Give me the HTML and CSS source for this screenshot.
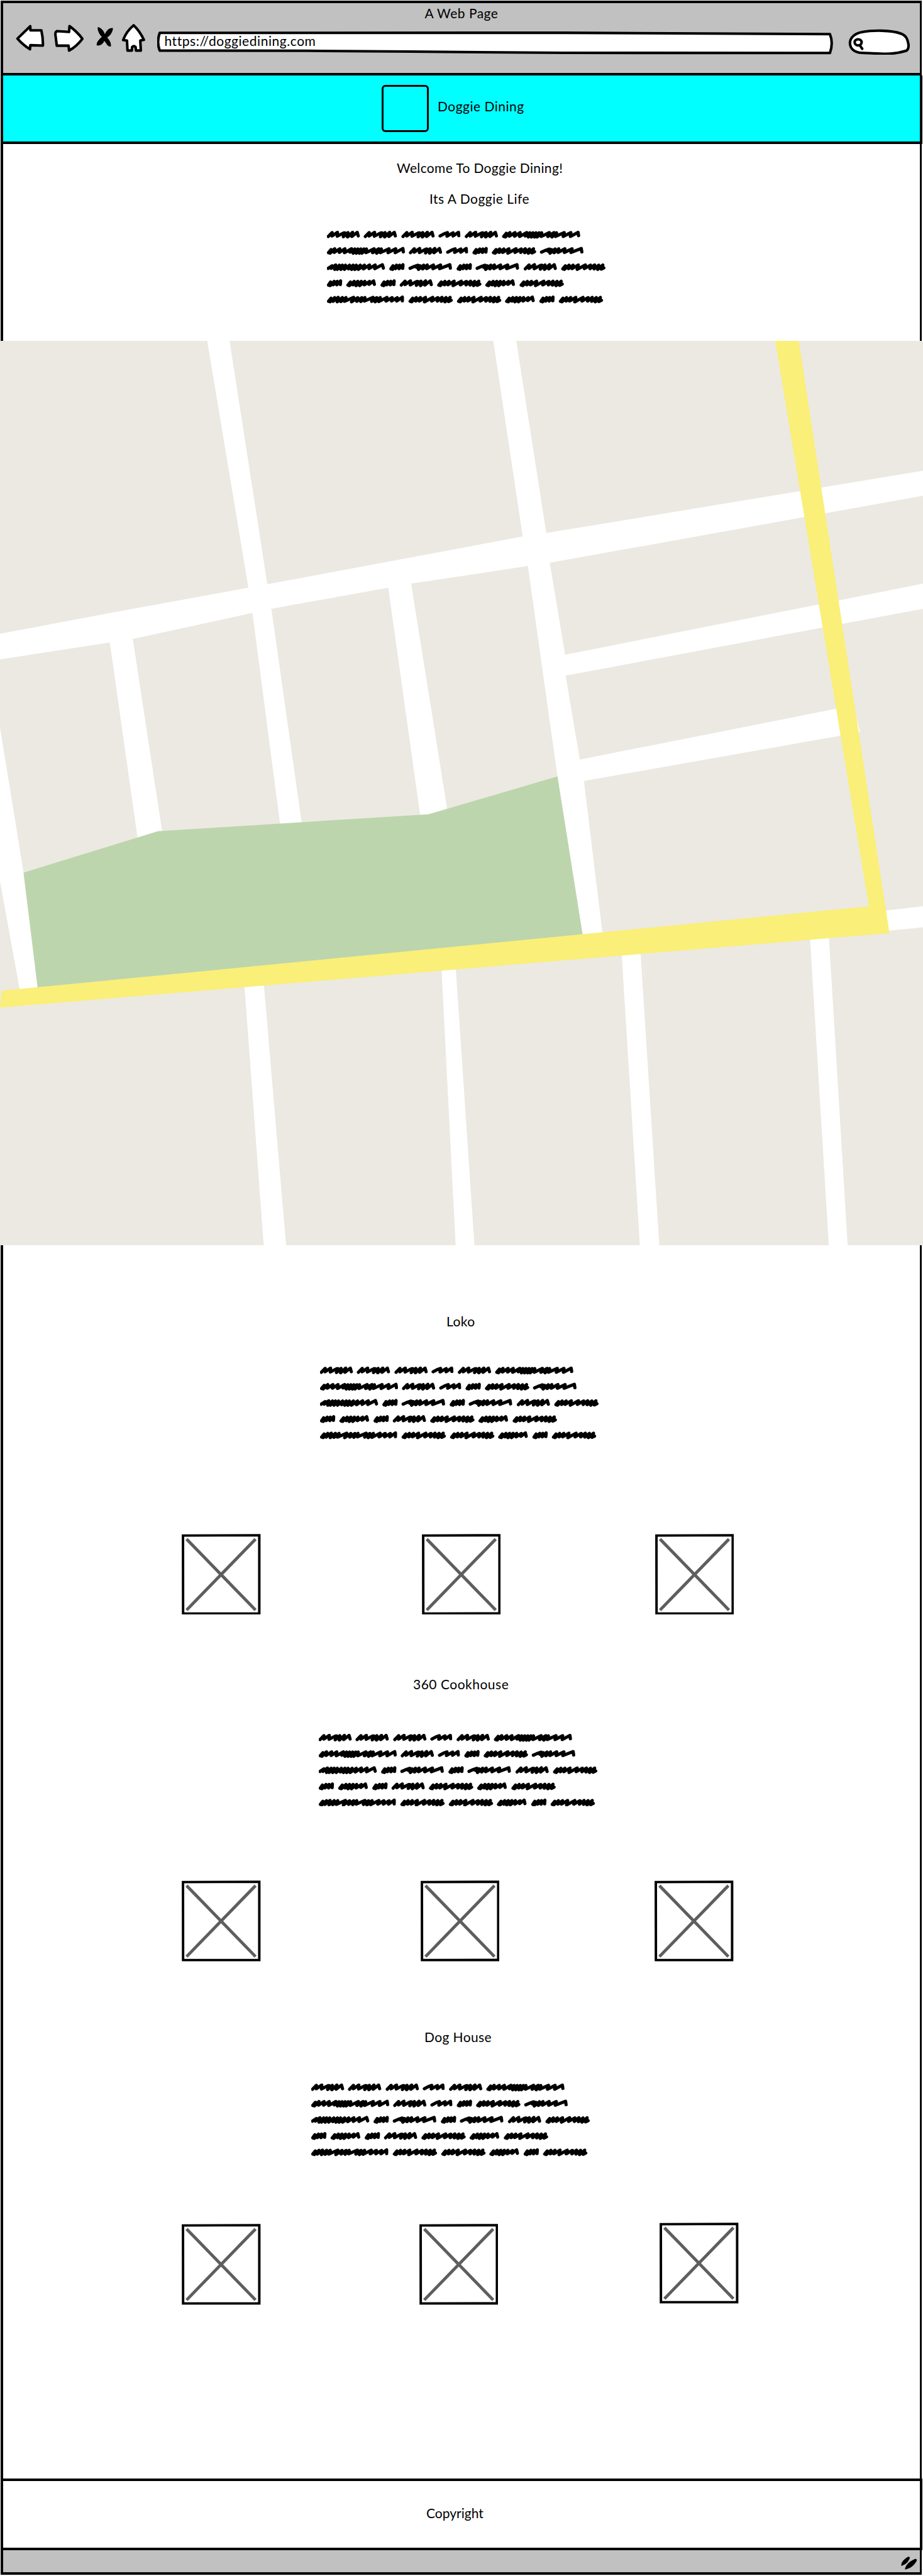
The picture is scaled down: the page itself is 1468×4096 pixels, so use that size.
FILE: index.html
```html
<!DOCTYPE html>
<html lang="en">
<head>
<meta charset="utf-8">
<title>Doggie Dining</title>
<link rel="stylesheet" href="styles.css">
</head>
<body>
<svg class="defs" aria-hidden="true">
  <defs>
    <path id="w-a" d="M2.5 11L10 3.5L10 10L20.500 3L20 10.500L33 4L35 4L32 11.500L41 3.500L40 12L50 3L48.500 11L59 3L61 10"/>
    <path id="w-b" d="M2.500 10L10 6L17 3.500L16 10.500L28 4L28 10L38.500 3L39 9.500"/>
    <path id="w-c" d="M3 11L8 5L6 12L15 3.500L14 10.500L25 3.500L24 10.500L35 3.500L34 11L48 3.500L45 10L54 4L51 12L60 4L57 12L66 4L63 12L72 4L68 12L77 4L76 11L92 3.500L89 11L101 3.500L97 12L106 4L104 11L121 3.500L119 11L134 3.500L133 11L148 3L149 9.500"/>
    <path id="w-d" d="M3 11L7 5L6 12L14 4L12 10.500L20 4L19 10.500L26.500 3L26 10"/>
    <path id="w-e" d="M3 11L8 5L6 12L15 4L14 10.500L23 4L21 10.500L33 3.500L31 12L47 3.500L45 10.500L57 4L56 10.500L65 3.500L64 11L73 4L71 12L81 3.500L78 11.500L83 9"/>
    <path id="w-f" d="M2.500 10L9 7L18 4L15 8L22 5L19 12L29 4L27 11L36 3.500L35 10.500L48 3.500L47 10.500L62 3.500L60 10.500L80 3L81 9.500"/>
    <path id="w-g" d="M2.500 10L10 5L8 10L17 3.500L15 12L24 4L20 12L30 4L27 12L36 4L34 12L44 4L42 11L51 4L48 12L57 4L54 12L65 4L61 12L73 4L71 11L83 3.500L82 10.500L94 3.500L93 10.500L108 3L110 9.500"/>
    <path id="w-h" d="M3 11L8 5L6 12L15 4L13 10.500L22 4L19 12L29 4L26 12L36 4L35 10.500L45 4L44 9.500L53 3L54.500 9.500"/>
    <path id="w-i" d="M3 11L8 5L6 12L15 4L12 11L22 3.500L20 12L30 4L27 11.500L37 4L34 11L52 3.500L48 12L60 4L58 11L68 4L66 11.500L74 4L73 10.500L90 3.500L87 11L97 4L94 12L104 4L101 11.500L117 3.500L115 10.500L127 4L126 10.500L137 4L136 10.500L147 3L147 10"/>
    <g id="scribble" fill="none" stroke="#000" stroke-width="6.300" stroke-linecap="round" stroke-linejoin="round">
      <use href="#w-a" x="0"/><use href="#w-a" x="72.300"/><use href="#w-a" x="145.800"/><use href="#w-b" x="218"/><use href="#w-a" x="269.400"/><use href="#w-c" x="341.700"/>
      <g transform="translate(0 31.600)"><use href="#w-c" x="0"/><use href="#w-a" x="160.300"/><use href="#w-b" x="233"/><use href="#w-d" x="284"/><use href="#w-e" x="321.800"/><use href="#w-f" x="416"/></g>
      <g transform="translate(0 63.200)"><use href="#w-g" x="0"/><use href="#w-d" x="121.700"/><use href="#w-f" x="159.600"/><use href="#w-d" x="253"/><use href="#w-f" x="290.500"/><use href="#w-a" x="384.200"/><use href="#w-e" x="457"/></g>
      <g transform="translate(0 94.800)"><use href="#w-d" x="0"/><use href="#w-h" x="37.900"/><use href="#w-d" x="104.500"/><use href="#w-a" x="142.400"/><use href="#w-e" x="215"/><use href="#w-h" x="309"/><use href="#w-e" x="375.800"/></g>
      <g transform="translate(0 126.400)"><use href="#w-i" x="0"/><use href="#w-e" x="159.200"/><use href="#w-e" x="253.700"/><use href="#w-h" x="347.500"/><use href="#w-d" x="414.400"/><use href="#w-e" x="452.300"/></g>
    </g>
    <g id="photo" fill="none">
      <path d="M9.500 10L144 148.500M144 10L9.500 148.500" stroke="#5e5e5e" stroke-width="6"/>
      <path d="M2.500 3.200L151.300 2.600L151.300 155L2.700 155.200Z" stroke="#000" stroke-width="4.800"/>
    </g>
  </defs>
</svg>

<div class="browser">
  <div class="toolbar">
    <div class="window-title">A Web Page</div>
    <div class="controls">
      <svg class="icon back" viewBox="31 46 56 61"><path d="M34.400 74.700L59.300 50.500L59.700 58.500L81 58.500Q84.500 74 84 88.300L59.500 87.500L58.800 95.500Q45 87 34.400 74.700Z"/></svg>
      <svg class="icon forward" viewBox="104 46 59 61"><path d="M111 60L134.500 61.700L135.300 50.300Q150 61 160.500 75Q149 90 134.500 98L133.500 88.300L110.500 88.500Q109 76 107.700 66Q108 61 111 60Z"/></svg>
      <svg class="icon stop" viewBox="187 46 33 61"><path class="solid" d="M190 52C197 53 202 60 204 66C207 58 213 53 219.500 54C220 62 213 70 208.500 72.500C213 78 217 84 215.500 90C210 91 207 85 203 79C200 85 195 89 188 88C187 81 193 76 198 71C193 66 189 59 190 52Z"/></svg>
      <svg class="icon home" viewBox="236 46 47 61"><path d="M260 48.700Q272 60 280 77L273 78.500L274 98L264.500 98L263.800 91Q260.500 88 257 91L256.500 98L248 98L247 78.500L239.500 77.500Q246 60 260 48.700Z"/></svg>
      <div class="address">
        <svg class="address-frame" viewBox="307 46 1319 61"><path d="M312 63.500L1100 63.300L1619 66Q1626 83 1619 102.700L1100 102.500L800 100L600 98.500L312 98Q305.500 82 312 63.500Z"/></svg>
        <span class="url">https://doggiedining.com</span>
      </div>
      <svg class="icon search" viewBox="1654 46 121 61"><path d="M1681 102.500C1666 102 1657 94 1657.500 82C1658.500 72 1668 64 1681 62C1702 58 1738 58 1757 65C1768 69 1770 77 1771.700 87Q1772 96 1767 98.500C1740 107 1722 104 1681 102.500Z"/><ellipse cx="1673.400" cy="82" rx="6.800" ry="6"/><path d="M1677 88.500L1681.400 94.500"/></svg>
    </div>
  </div>

  <header class="banner">
    <div class="logo"></div>
    <div class="brand">Doggie Dining</div>
  </header>

  <section class="hero">
    <h1 class="heading welcome">Welcome To Doggie Dining!</h1>
    <h2 class="heading tagline">Its A Doggie Life</h2>
    <svg class="copy" viewBox="0 0 543 142"><use href="#scribble"/></svg>
  </section>

  <svg class="map" viewBox="0 4 1568 1553" preserveAspectRatio="none">
    <rect x="0" y="4" width="1568" height="1553" fill="#ece9e2"/>
    <g fill="#fff">
      <path d="M0 507L188 471L422 428L888 340L928 334L1568 227V270L934 385L698 421L461 464L225 516L0 551Z"/>
      <path d="M352 4H390L454 421L461 464L513 835H476L430 480L422 428Z"/>
      <path d="M838 4H877L928 334L934 385L960 543L961 580L985 723L992 760L1024 1025H990L947 752L896 385L888 340Z"/>
      <path d="M186 518L225 512L276 850L234 860Z"/>
      <path d="M659 424L698 418L760 810L714 820Z"/>
      <path d="M955 544L1568 421V464L955 580Z"/>
      <path d="M980 724L1424 635L1456 655L1461 676L1428 682L985 761Z"/>
      <path d="M0 668L40 917L64 1115L76 1142L38 1146L33 1115L0 932Z"/>
      <path d="M1490 984L1568 975V1011L1490 1019Z"/>
      <path d="M415 1108L448 1106L486 1557H448Z"/>
      <path d="M750 1080L774 1078L806 1557H774Z"/>
      <path d="M1056 1055L1088 1052L1120 1557H1087Z"/>
      <path d="M1376 1028L1408 1026L1440 1557H1408Z"/>
    </g>
    <path fill="#bdd5ad" d="M40 917L268 846L728 817L947 752L990 1025L64 1115Z"/>
    <path fill="#faef78" d="M1317 4H1357L1511 1021L0 1149L3 1120L1476 975Z"/>
  </svg>

  <section class="place loko">
    <h2 class="heading">Loko</h2>
    <svg class="copy" viewBox="0 0 543 142"><use href="#scribble"/></svg>
    <div class="photos">
      <svg class="photo" viewBox="0 0 154 158"><use href="#photo"/></svg>
      <svg class="photo" viewBox="0 0 154 158"><use href="#photo"/></svg>
      <svg class="photo" viewBox="0 0 154 158"><use href="#photo"/></svg>
    </div>
  </section>

  <section class="place cookhouse">
    <h2 class="heading">360 Cookhouse</h2>
    <svg class="copy" viewBox="0 0 543 142"><use href="#scribble"/></svg>
    <div class="photos">
      <svg class="photo" viewBox="0 0 154 158"><use href="#photo"/></svg>
      <svg class="photo" viewBox="0 0 154 158"><use href="#photo"/></svg>
      <svg class="photo" viewBox="0 0 154 158"><use href="#photo"/></svg>
    </div>
  </section>

  <section class="place doghouse">
    <h2 class="heading">Dog House</h2>
    <svg class="copy" viewBox="0 0 543 142"><use href="#scribble"/></svg>
    <div class="photos">
      <svg class="photo" viewBox="0 0 154 158"><use href="#photo"/></svg>
      <svg class="photo" viewBox="0 0 154 158"><use href="#photo"/></svg>
      <svg class="photo" viewBox="0 0 154 158"><use href="#photo"/></svg>
    </div>
  </section>

  <footer class="footer">
    <div class="copyright">Copyright</div>
  </footer>
  <div class="statusbar">
    <svg class="grip" viewBox="1756 4982 34 29"><path d="M1771 4985C1775 4984 1775 4988 1773 4991C1769 4998 1764 5001 1758 5003C1757 4996 1762 4990 1771 4985Z"/><path d="M1785 4989C1789 4989 1789 4992 1786 4996C1779 5006 1772 5008 1765 5010C1765 5002 1774 4993 1785 4989Z"/></svg>
  </div>
</div>
</body>
</html>
```

FILE: styles.css
```css
* { box-sizing: border-box; }

body {
  margin: 0;
  background: #fff;
  color: #000;
  font-family: Lato, "Liberation Sans", sans-serif;
  font-size: 21px;
  line-height: 24px;
}

svg { display: block; flex: none; }

.defs { position: absolute; width: 0; height: 0; }

.browser {
  display: flex;
  flex-direction: column;
  width: 1465px;
  height: 4093px;
  margin: 1px 2px 0 1px;
  border: solid #000;
  border-width: 4px 3px 4px 4px;
}

/* browser chrome */
.toolbar {
  height: 115px;
  flex: none;
  padding-top: 4px;
  background: #c1c1c1;
  border-bottom: 4px solid #000;
}

.window-title { text-align: center; letter-spacing: 0.5px; }

.controls {
  display: flex;
  height: 50px;
  margin-top: 4.500px;
  padding-left: 20.300px;
}

.icon, .address-frame {
  height: 49.750px;
  fill: #fff;
  stroke: #000;
  stroke-width: 5;
  stroke-linejoin: round;
  stroke-linecap: round;
}

.solid { fill: #000; stroke: none; }

.back { width: 45.700px; }
.forward { width: 48.100px; margin-left: 13.900px; }
.stop { width: 27px; margin-left: 19.600px; }
.home { width: 38.300px; margin-left: 13px; }
.address { position: relative; flex: none; width: 1075.700px; margin-left: 19.600px; padding: 15.500px 0 0 11px; }
.address-frame { position: absolute; left: 0; top: 0; width: 100%; }
.url { position: relative; display: block; letter-spacing: 0.55px; }
.search { width: 98.700px; margin-left: 22.800px; }

/* site header */
.banner {
  display: flex;
  flex: none;
  height: 109px;
  margin: 0 -4px;
  padding: 15px 0 0 602px;
  background: #0ff;
  border: solid #000;
  border-width: 0 4px 4px;
}

.logo { width: 75px; height: 75px; border: 3px solid #000; border-radius: 6px; }
.brand { margin: 22px 0 0 14px; letter-spacing: 0.5px; }

.heading { margin: 0; font-size: 21px; font-weight: 400; line-height: 24px; letter-spacing: 0.4px; white-space: nowrap; }
.copy { width: 442.900px; height: 115.800px; }

.hero { flex: none; height: 313px; padding-top: 26px; }
.welcome { margin-left: 626px; letter-spacing: 0.35px; }
.tagline { margin: 25px 0 39px 678px; letter-spacing: 0.5px; }
.hero .copy { margin-left: 515.300px; }

.map { flex: none; width: 1468px; height: 1438px; margin: 0 -5px; }

/* restaurant listings */
.place { flex: none; }
.loko { height: 577px; padding-top: 109px; }
.cookhouse { height: 561px; padding-top: 109px; }
.doghouse { height: 823px; padding-top: 109px; }

.photos { display: flex; padding-left: 284.300px; }
.photo { width: 125.600px; height: 128.900px; }

.loko .heading { margin-left: 705px; }
.loko .copy { margin: 60px 0 149.800px 504.300px; }
.loko .photo + .photo { margin-left: 256px; }
.loko .photo:last-child { margin-left: 245.200px; }

.cookhouse .heading { margin-left: 652px; letter-spacing: 0.5px; }
.cookhouse .copy { margin: 66.700px 0 117.300px 502.400px; }
.cookhouse .photo + .photo { margin-left: 254px; }
.cookhouse .photo:last-child { margin-left: 246.900px; }

.doghouse .heading { margin-left: 670px; }
.doghouse .copy { margin: 62px 0 107.500px 490px; }
.doghouse .photo + .photo { margin-left: 251.800px; }
.doghouse .photo:last-child { margin: -2.700px 0 0 257px; }

.footer {
  flex: none;
  height: 114px;
  margin: 0 -4px;
  padding: 39px 0 0 673px;
  border: solid #000;
  border-width: 4px;
}

.statusbar {
  display: flex;
  flex: 1;
  justify-content: flex-end;
  padding: 8px 3px 0 0;
  background: #c1c1c1;
}

.grip { width: 27.700px; height: 23.700px; }
```
